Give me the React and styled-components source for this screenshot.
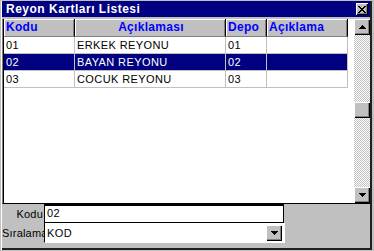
import React from 'react';
import styled, { createGlobalStyle } from 'styled-components';

const GlobalStyle = createGlobalStyle`
  html, body {
    margin: 0;
    padding: 0;
    background: #c0c0c0;
  }
  * {
    box-sizing: border-box;
  }
`;

const columns = [
  { key: 'kod', title: 'Kodu', width: 71, align: 'left' },
  { key: 'aciklamasi', title: 'Açıklaması', width: 151, align: 'center' },
  { key: 'depo', title: 'Depo', width: 41, align: 'left' },
  { key: 'aciklama', title: 'Açıklama', width: 81, align: 'left' },
];

const rows = [
  { kod: '01', aciklamasi: 'ERKEK REYONU', depo: '01', aciklama: '' },
  { kod: '02', aciklamasi: 'BAYAN REYONU', depo: '02', aciklama: '', selected: true },
  { kod: '03', aciklamasi: 'COCUK REYONU', depo: '03', aciklama: '' },
];

const UpArrow = () => (
  <svg width="7" height="4" viewBox="0 0 7 4">
    <path d="M3 0h1v1h1v1h1v1h1v1H0V3h1V2h1V1h1z" fill="#000" />
  </svg>
);

const DownArrow = () => (
  <svg width="7" height="4" viewBox="0 0 7 4">
    <path d="M0 0h7v1H6v1H5v1H4v1H3V3H2V2H1V1H0z" fill="#000" />
  </svg>
);

const CloseIcon = () => (
  <svg width="8" height="7" viewBox="0 0 8 7">
    <path
      d="M0 0h2v1h1v1h2V1h1V0h2v1H7v1H6v1H5v1h1v1h1v1h1v1H6V6H5V5H3v1H2v1H0V6h1V5h1V4h1V3H2V2H1V1H0z"
      fill="#000"
    />
  </svg>
);

const App = () => {
  return (
    <>
      <GlobalStyle />
      <Window>
        <TitleBar>
          <Title>Reyon Kartları Listesi</Title>
          <CloseButton>
            <CloseIcon />
          </CloseButton>
        </TitleBar>

        <Grid>
          <Table>
            <HeaderRow>
              {columns.map((c) => (
                <HeaderCell key={c.key} $width={c.width} $align={c.align}>
                  {c.title}
                </HeaderCell>
              ))}
            </HeaderRow>
            {rows.map((r) => (
              <Row key={r.kod}>
                {columns.map((c) => (
                  <Cell key={c.key} $width={c.width} $selected={r.selected}>
                    {r[c.key]}
                  </Cell>
                ))}
              </Row>
            ))}
          </Table>

          <ScrollBar>
            <ArrowButton>
              <UpArrow />
            </ArrowButton>
            <Track>
              <Thumb />
            </Track>
            <ArrowButton>
              <DownArrow />
            </ArrowButton>
          </ScrollBar>
        </Grid>

        <Form>
          <FieldRow>
            <Label>Kodu</Label>
            <TextBox>02</TextBox>
          </FieldRow>
          <FieldRow>
            <Label>Sıralama</Label>
            <Combo>
              <ComboText>KOD</ComboText>
              <ComboButton>
                <DownArrow />
              </ComboButton>
            </Combo>
          </FieldRow>
        </Form>
      </Window>
    </>
  );
};

export default App;

const Window = styled.div`
  width: 374px;
  height: 251px;
  background: #c0c0c0;
  border: 1px solid #c0c0c0;
  border-right-width: 2px;
  box-shadow: inset 1px 0 0 #fff, inset -2px -2px 0 #202020;
  padding: 0 2px 0 1px;
  display: flex;
  flex-direction: column;
  font-family: 'Liberation Sans', Arial, sans-serif;
  font-size: 11px;
`;

const TitleBar = styled.div`
  height: 16px;
  background: #000080;
  display: flex;
  align-items: center;
  justify-content: space-between;
  padding: 0 2px 0 4px;
`;

const Title = styled.span`
  color: #fff;
  font-weight: bold;
  font-size: 12px;
  letter-spacing: 0.5px;
`;

const CloseButton = styled.div`
  width: 12px;
  height: 12px;
  background: #c0c0c0;
  display: flex;
  align-items: center;
  justify-content: center;
  box-shadow: inset 1px 1px 0 #fff, inset -1px -1px 0 #000, inset -2px -2px 0 #808080;
`;

const Grid = styled.div`
  margin-top: 2px;
  height: 185px;
  display: flex;
  background: #fff;
  border-left: 1px solid #808080;
  border-bottom: 1px solid #000;
  box-shadow: inset 1px 0 0 #000;
  padding-left: 1px;
`;

const Table = styled.div`
  flex: 1;
  display: flex;
  flex-direction: column;
`;

const HeaderRow = styled.div`
  display: flex;
  height: 18px;
`;

const HeaderCell = styled.div`
  width: ${(p) => p.$width}px;
  flex: none;
  height: 18px;
  background: #c0c0c0;
  color: #0000ff;
  font-weight: bold;
  font-size: 12px;
  letter-spacing: 0.3px;
  line-height: 17px;
  padding-left: 2px;
  text-align: ${(p) => p.$align};
  border-right: 1px solid #000;
  border-bottom: 1px solid #808080;
  box-shadow: inset 1px 1px 0 #fff, inset -1px 0 0 #808080;
`;

const Row = styled.div`
  display: flex;
  height: 17px;
`;

const Cell = styled.div`
  width: ${(p) => p.$width}px;
  flex: none;
  height: 17px;
  line-height: 16px;
  padding-left: 2px;
  letter-spacing: 0.4px;
  background: ${(p) => (p.$selected ? '#000080' : '#fff')};
  color: ${(p) => (p.$selected ? '#fff' : '#000')};
  border-right: 1px solid #c0c0c0;
  border-bottom: 1px solid #c0c0c0;
  white-space: nowrap;
`;

const ScrollBar = styled.div`
  width: 16px;
  flex: none;
  display: flex;
  flex-direction: column;
`;

const ArrowButton = styled.div`
  width: 16px;
  height: 16px;
  flex: none;
  background: #c0c0c0;
  display: flex;
  align-items: center;
  justify-content: center;
  box-shadow: inset 1px 1px 0 #fff, inset -1px -1px 0 #000, inset -2px -2px 0 #808080;
`;

const Track = styled.div`
  flex: 1;
  background: repeating-conic-gradient(#c0c0c0 0 25%, #fff 0 50%) 0 0 / 2px 2px;
`;

const Thumb = styled.div`
  margin-top: 67px;
  height: 16px;
  background: #c0c0c0;
  box-shadow: inset 1px 1px 0 #fff, inset -1px -1px 0 #000, inset -2px -2px 0 #808080;
`;

const Form = styled.div`
  display: flex;
  flex-direction: column;
`;

const FieldRow = styled.div`
  display: flex;
  align-items: center;
`;

const Label = styled.div`
  width: 42px;
  text-align: right;
  color: #000;
  font-size: 11px;
  letter-spacing: 0.2px;
  padding-right: 1px;
`;

const TextBox = styled.div`
  width: 240px;
  height: 19px;
  background: #fff;
  border: 1px solid #000;
  border-top-width: 2px;
  padding-left: 2px;
  line-height: 15px;
  font-size: 11px;
  letter-spacing: 0.4px;
`;

const Combo = styled.div`
  width: 241px;
  height: 20px;
  background: #fff;
  border-left: 1px solid #000;
  border-right: 1px solid #fff;
  border-bottom: 1px solid #fff;
  display: flex;
  align-items: center;
  justify-content: space-between;
  padding: 0 2px 0 2px;
`;

const ComboText = styled.span`
  font-size: 11px;
  letter-spacing: 0.4px;
`;

const ComboButton = styled.div`
  width: 16px;
  height: 16px;
  background: #c0c0c0;
  display: flex;
  align-items: center;
  justify-content: center;
  box-shadow: inset 1px 1px 0 #fff, inset -1px -1px 0 #000, inset -2px -2px 0 #808080;
`;
